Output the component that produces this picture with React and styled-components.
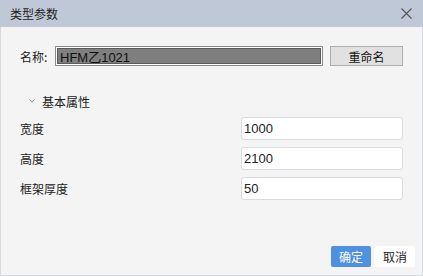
import React from "react";
import styled, { createGlobalStyle } from "styled-components";

const Global = createGlobalStyle`
  html, body { margin: 0; padding: 0; background: #ffffff; }
  body { font-family: "Liberation Sans", "Noto Sans CJK SC", sans-serif; }
  * { box-sizing: border-box; }
`;

const Dialog = styled.div`
  width: 423px;
  height: 276px;
  display: flex;
  flex-direction: column;
  border: 1px solid #d6d9de;
  border-top: none;
  background: #f4f4f4;
`;

const Header = styled.div`
  height: 27px;
  margin: 0 -1px;
  background: #bfc8d6;
  display: flex;
  align-items: center;
  justify-content: space-between;
  padding: 0 11px 0 10px;
  flex-shrink: 0;
`;

const Title = styled.div`
  font-family: "Noto Sans CJK SC", sans-serif;
  font-size: 12px;
  color: #222;
  line-height: 14px;
`;

const CloseBtn = styled.button`
  width: 12px;
  height: 12px;
  border: none;
  background: none;
  padding: 0;
  display: flex;
  align-items: center;
  justify-content: center;
  cursor: pointer;
`;

const Body = styled.div`
  flex: 1;
  display: flex;
  flex-direction: column;
  padding: 0 19px;
`;

const NameRow = styled.div`
  display: flex;
  align-items: center;
  margin-top: 19px;
  height: 20px;
`;

const Label = styled.span`
  font-family: "Noto Sans CJK SC", sans-serif;
  font-size: 12px;
  color: #222;
  width: ${(p) => p.$w || "auto"};
  flex-shrink: 0;
`;

const NameInput = styled.div`
  width: 268px;
  height: 20px;
  background: #7f7f7f;
  border: 1px solid #8a8a8a;
  box-shadow: inset 0 0 0 1px #ffffff, inset 0 0 0 2px #5a5a5a;
  display: flex;
  align-items: center;
  padding-left: 4px;
  font-family: "Liberation Sans", "Noto Sans CJK SC", sans-serif;
  font-size: 13px;
  color: #111;
`;

const GrayButton = styled.button`
  margin-left: auto;
  width: 73px;
  height: 20px;
  background: #e1e1e1;
  border: 1px solid #adadad;
  font-family: "Noto Sans CJK SC", sans-serif;
  font-size: 12px;
  color: #111;
  padding: 0;
  display: flex;
  align-items: center;
  justify-content: center;
`;

const Section = styled.div`
  display: flex;
  align-items: center;
  height: 16px;
  margin-top: 27px;
  padding-left: 9px;
  gap: 7px;
`;

const SectionTitle = styled.span`
  font-family: "Noto Sans CJK SC", sans-serif;
  font-size: 12px;
  color: #222;
`;

const PropList = styled.div`
  display: flex;
  flex-direction: column;
  gap: 7px;
  margin-top: 8px;
`;

const PropRow = styled.div`
  display: grid;
  grid-template-columns: 1fr 162px;
  align-items: center;
  height: 23px;
`;

const ValueInput = styled.div`
  height: 23px;
  background: #ffffff;
  border: 1px solid #d8dbe1;
  border-radius: 3px;
  display: flex;
  align-items: center;
  padding-left: 2px;
  font-family: "Liberation Sans", sans-serif;
  font-size: 13px;
  color: #222;
`;

const Footer = styled.div`
  margin-top: auto;
  display: flex;
  justify-content: flex-end;
  gap: 4px;
  padding: 0 7px 8px 0;
  margin-right: -19px;
`;

const FooterButton = styled.button`
  width: 40px;
  height: 21px;
  border: none;
  border-radius: 2px;
  padding: 0;
  font-family: "Noto Sans CJK SC", sans-serif;
  font-size: 12px;
  background: ${(p) => (p.$primary ? "#4f90e0" : "#ffffff")};
  color: ${(p) => (p.$primary ? "#ffffff" : "#222")};
  display: flex;
  align-items: center;
  justify-content: center;
`;

const props = [
  { label: "宽度", value: "1000" },
  { label: "高度", value: "2100" },
  { label: "框架厚度", value: "50" },
];

export default function App() {
  return (
    <>
      <Global />
      <Dialog>
        <Header>
          <Title>类型参数</Title>
          <CloseBtn aria-label="close">
            <svg width="11" height="11" viewBox="0 0 11 11">
              <path d="M0.5 0.5 L10.5 10.5 M10.5 0.5 L0.5 10.5" stroke="#555" strokeWidth="1.1" fill="none" />
            </svg>
          </CloseBtn>
        </Header>
        <Body>
          <NameRow>
            <Label $w="35px">名称:</Label>
            <NameInput>HFM乙1021</NameInput>
            <GrayButton>重命名</GrayButton>
          </NameRow>
          <Section>
            <svg width="6" height="4" viewBox="0 0 6 4">
              <path d="M0.5 0.5 L3 3.2 L5.5 0.5" stroke="#8a8a8a" strokeWidth="1" fill="none" />
            </svg>
            <SectionTitle>基本属性</SectionTitle>
          </Section>
          <PropList>
            {props.map((p) => (
              <PropRow key={p.label}>
                <Label>{p.label}</Label>
                <ValueInput>{p.value}</ValueInput>
              </PropRow>
            ))}
          </PropList>
          <Footer>
            <FooterButton $primary>确定</FooterButton>
            <FooterButton>取消</FooterButton>
          </Footer>
        </Body>
      </Dialog>
    </>
  );
}
